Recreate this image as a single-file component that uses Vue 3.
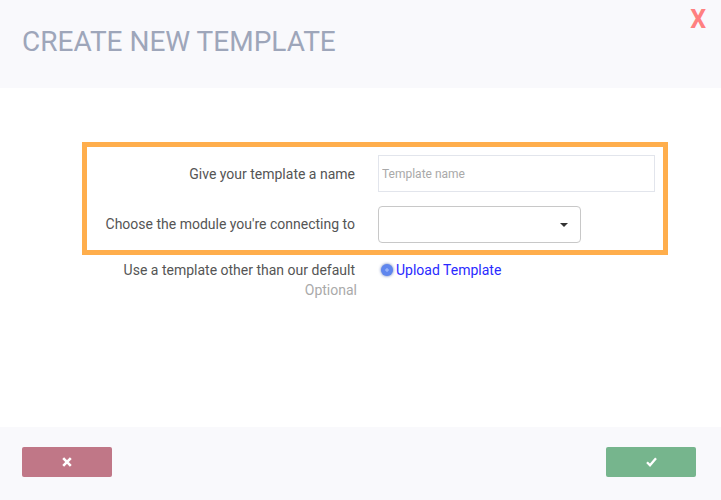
<script setup>
</script>

<template>
  <div class="modal">
    <header class="head">
      <h1 class="title">CREATE NEW TEMPLATE</h1>
      <span class="close">X</span>
    </header>
    <main class="body">
      <div class="highlight">
        <label class="label mid">Give your template a name</label>
        <input class="name" type="text" placeholder="Template name" />
        <label class="label mid up">Choose the module you're connecting to</label>
        <div class="select">
          <span class="caret"></span>
        </div>
      </div>
      <div class="upload-row">
        <div class="label">
          <div>Use a template other than our default</div>
          <div class="optional">Optional</div>
        </div>
        <a class="upload">
          <span class="plus">
            <svg width="6" height="6" viewBox="0 0 6 6"><path d="M1 3H5M3 1V5" stroke="#a9bffa" stroke-width="1" fill="none"/></svg>
          </span>
          <span>Upload Template</span>
        </a>
      </div>
    </main>
    <footer class="foot">
      <button class="btn cancel">
        <svg width="10" height="10" viewBox="0 0 10 10"><path d="M1.2 1.2L8.8 8.8M8.8 1.2L1.2 8.8" stroke="#fff" stroke-width="2.6" fill="none"/></svg>
      </button>
      <button class="btn ok">
        <svg width="11" height="10" viewBox="0 0 11 10"><path d="M1 5.2L4 8.2L10 1.2" stroke="#fff" stroke-width="2.3" fill="none"/></svg>
      </button>
    </footer>
  </div>
</template>

<style scoped>
.modal {
  width: 721px;
  height: 500px;
  display: flex;
  flex-direction: column;
  font-family: Roboto, "Liberation Sans", sans-serif;
  background: #fff;
  overflow: hidden;
}
.head {
  height: 88px;
  background: #f9f9fc;
  display: flex;
  justify-content: space-between;
  align-items: flex-start;
  padding: 0 15px 0 22px;
  box-sizing: border-box;
}
.title {
  margin: 26px 0 0;
  font-size: 28px;
  line-height: 31px;
  font-weight: 400;
  color: #9ea6ba;
}
.close {
  margin-top: 6px;
  font-size: 25px;
  line-height: 28px;
  font-weight: 700;
  color: #ff8080;
}
.body {
  flex: 1;
  padding-top: 54px;
}
.highlight {
  margin-left: 82px;
  width: 586px;
  box-sizing: border-box;
  border: 5px solid #ffae4c;
  padding: 8px 8px 7px 0;
  display: grid;
  grid-template-columns: 268px 1fr;
  column-gap: 23px;
  row-gap: 14px;
}
.label {
  font-size: 14px;
  line-height: 20px;
  color: #555;
  text-align: right;
}
.mid {
  align-self: center;
}
.up {
  margin-bottom: 2px;
}
.name {
  height: 37px;
  box-sizing: border-box;
  border: 1px solid #e2e5ec;
  padding: 0 3px;
  margin: 0;
  outline: none;
  font-family: inherit;
  font-size: 12px;
  color: #555;
  background: #fff;
}
.name::placeholder {
  color: #a9a9a9;
  opacity: 1;
}
.select {
  width: 203px;
  height: 37px;
  box-sizing: border-box;
  border: 1px solid #c8c8c8;
  border-radius: 4px;
  background: #fff;
  display: flex;
  align-items: center;
  justify-content: flex-end;
  padding-right: 12px;
}
.caret {
  width: 0;
  height: 0;
  border-left: 4px solid transparent;
  border-right: 4px solid transparent;
  border-top: 4px solid #333;
}
.upload-row {
  margin-top: 5px;
  margin-left: 87px;
  display: grid;
  grid-template-columns: 268px 1fr;
  column-gap: 26px;
}
.optional {
  color: #aaa;
  margin-right: -2px;
}
.upload {
  display: flex;
  align-items: center;
  align-self: start;
  height: 20px;
  gap: 3px;
  font-size: 14px;
  color: #2a2aff;
}
.plus {
  width: 12px;
  height: 12px;
  border-radius: 50%;
  background: #5f86ee;
  box-shadow: 0 0 3px rgba(60, 90, 170, 0.9);
  display: flex;
  align-items: center;
  justify-content: center;
}
.foot {
  height: 73px;
  background: #f9f9fc;
  display: flex;
  justify-content: space-between;
  align-items: flex-start;
  padding: 20px 25px 0 22px;
  box-sizing: border-box;
}
.btn {
  width: 90px;
  height: 30px;
  border: none;
  border-radius: 2px;
  padding: 0;
  display: flex;
  align-items: center;
  justify-content: center;
}
.cancel {
  background: #c07787;
}
.ok {
  background: #76b58d;
}
</style>
